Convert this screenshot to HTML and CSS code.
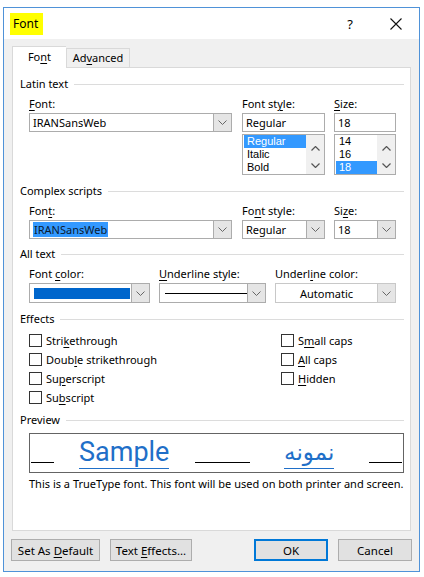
FILE: index.html
```html
<!DOCTYPE html>
<html>
<head>
<meta charset="utf-8">
<link rel="stylesheet" href="styles.css">
</head>
<body>
<div class="window">
  <div class="titlebar">
    <span class="title">Font</span>
    <span class="help">?</span>
    <svg class="close" width="12" height="12" viewBox="0 0 12 12"><path d="M0.5 0.5 L11.5 11.5 M11.5 0.5 L0.5 11.5" stroke="#111" stroke-width="1.1" fill="none"/></svg>
  </div>
  <div class="client">
    <div class="tabs">
      <div class="tab active">Fo<u>n</u>t</div>
      <div class="tab">Ad<u>v</u>anced</div>
    </div>
    <div class="panel">
      <div class="group"><span>Latin text</span><i></i></div>
      <div class="row labels">
        <label class="c1"><u>F</u>ont:</label>
        <label class="c2">Font st<u>y</u>le:</label>
        <label class="c3"><u>S</u>ize:</label>
      </div>
      <div class="row">
        <div class="combo c1"><span class="val">IRANSansWeb</span><span class="btn"><svg width="9" height="5" viewBox="0 0 9 5"><polyline points="0.5,0.5 4.5,4.5 8.5,0.5" fill="none" stroke="#666" stroke-width="1"/></svg></span></div>
        <div class="field c2">Regular</div>
        <div class="field c3">18</div>
      </div>
      <div class="row lists">
        <div class="c1"></div>
        <div class="list c2">
          <div class="items"><div class="sel">Regular</div><div>Italic</div><div>Bold</div></div>
          <div class="sb"><svg width="9" height="5" viewBox="0 0 9 5"><polyline points="0.5,4.5 4.5,0.5 8.5,4.5" fill="none" stroke="#555" stroke-width="1.2"/></svg><svg width="9" height="5" viewBox="0 0 9 5"><polyline points="0.5,0.5 4.5,4.5 8.5,0.5" fill="none" stroke="#555" stroke-width="1.2"/></svg></div>
        </div>
        <div class="list c3">
          <div class="items"><div>14</div><div>16</div><div class="sel">18</div></div>
          <div class="sb"><svg width="9" height="5" viewBox="0 0 9 5"><polyline points="0.5,4.5 4.5,0.5 8.5,4.5" fill="none" stroke="#555" stroke-width="1.2"/></svg><svg width="9" height="5" viewBox="0 0 9 5"><polyline points="0.5,0.5 4.5,4.5 8.5,0.5" fill="none" stroke="#555" stroke-width="1.2"/></svg></div>
        </div>
      </div>

      <div class="group g2"><span>Complex scripts</span><i></i></div>
      <div class="row labels">
        <label class="c1">Fon<u>t</u>:</label>
        <label class="c2">Fo<u>n</u>t style:</label>
        <label class="c3">Si<u>z</u>e:</label>
      </div>
      <div class="row">
        <div class="combo c1"><span class="val"><span class="hl">IRANSansWeb</span></span><span class="btn"><svg width="9" height="5" viewBox="0 0 9 5"><polyline points="0.5,0.5 4.5,4.5 8.5,0.5" fill="none" stroke="#666" stroke-width="1"/></svg></span></div>
        <div class="combo c2"><span class="val">Regular</span><span class="btn"><svg width="9" height="5" viewBox="0 0 9 5"><polyline points="0.5,0.5 4.5,4.5 8.5,0.5" fill="none" stroke="#666" stroke-width="1"/></svg></span></div>
        <div class="combo c3"><span class="val">18</span><span class="btn"><svg width="9" height="5" viewBox="0 0 9 5"><polyline points="0.5,0.5 4.5,4.5 8.5,0.5" fill="none" stroke="#666" stroke-width="1"/></svg></span></div>
      </div>

      <div class="group g3"><span>All text</span><i></i></div>
      <div class="row labels">
        <label class="d1">Font <u>c</u>olor:</label>
        <label class="d2"><u>U</u>nderline style:</label>
        <label class="d3">Underl<u>i</u>ne color:</label>
      </div>
      <div class="row">
        <div class="combo short d1"><span class="val"><span class="swatch"></span></span><span class="btn"><svg width="9" height="5" viewBox="0 0 9 5"><polyline points="0.5,0.5 4.5,4.5 8.5,0.5" fill="none" stroke="#666" stroke-width="1"/></svg></span></div>
        <div class="combo short d2"><span class="val"><span class="uline"></span></span><span class="btn"><svg width="9" height="5" viewBox="0 0 9 5"><polyline points="0.5,0.5 4.5,4.5 8.5,0.5" fill="none" stroke="#666" stroke-width="1"/></svg></span></div>
        <div class="combo short flat d3"><span class="val center">Automatic</span><span class="btn"><svg width="9" height="5" viewBox="0 0 9 5"><polyline points="0.5,0.5 4.5,4.5 8.5,0.5" fill="none" stroke="#666" stroke-width="1"/></svg></span></div>
      </div>

      <div class="group g4"><span>Effects</span><i></i></div>
      <div class="effects">
        <div class="col">
          <div class="chk"><b></b>Stri<u>k</u>ethrough</div>
          <div class="chk"><b></b>Doub<u>l</u>e strikethrough</div>
          <div class="chk"><b></b>Su<u>p</u>erscript</div>
          <div class="chk"><b></b>Su<u>b</u>script</div>
        </div>
        <div class="col right">
          <div class="chk"><b></b>S<u>m</u>all caps</div>
          <div class="chk"><b></b><u>A</u>ll caps</div>
          <div class="chk"><b></b><u>H</u>idden</div>
        </div>
      </div>

      <div class="group g5"><span>Preview</span><i></i></div>
      <div class="preview">
        <span class="ln l1"></span>
        <span class="sample">Sample</span>
        <span class="ln l2"></span>
        <span class="sample ar" lang="fa" dir="rtl">نمونه</span>
        <span class="ln l3"></span>
      </div>
      <div class="caption">This is a TrueType font. This font will be used on both printer and screen.</div>
    </div>
    <div class="buttons">
      <button class="b1">Set As <u>D</u>efault</button>
      <button class="b2">Text <u>E</u>ffects...</button>
      <span class="spacer"></span>
      <button class="b3 default">OK</button>
      <button class="b4">Cancel</button>
    </div>
  </div>
</div>
</body>
</html>
```
FILE: styles.css
```css
* { box-sizing: border-box; }
html, body { margin: 0; padding: 0; background: #fff; }
body {
  font-family: "Noto Sans", "Open Sans", sans-serif;
  font-size: 11px;
  color: #000;
  width: 424px;
  height: 577px;
  overflow: hidden;
}
u { text-decoration: underline; text-underline-offset: 2px; }
.window {
  margin: 7px 0 0 3px;
  width: 417px;
  height: 565px;
  border: 1px solid #4f92d8;
  display: flex;
  flex-direction: column;
}
.titlebar {
  height: 31px;
  background: #fff;
  display: flex;
  align-items: center;
  padding-left: 6px;
}
.title {
  background: #ffff00;
  width: 33px;
  height: 22px;
  line-height: 22px;
  padding-left: 3px;
  font-size: 12px;
}
.help {
  margin-left: auto;
  font-size: 13px;
  margin-right: 37px;
}
.close { margin-right: 17px; }
.client {
  flex: 1;
  background: #f0f0f0;
  padding: 7px 8px 0 8px;
  display: flex;
  flex-direction: column;
}
.tabs {
  display: flex;
  align-items: flex-end;
  height: 21px;
  position: relative;
  z-index: 1;
}
.tab {
  height: 19px;
  line-height: 18px;
  padding: 0 4px;
  border: 1px solid #d9d9d9;
  border-bottom: none;
  background: #f0f0f0;
  width: 64px;
  text-align: center;
}
.tab.active {
  height: 22px;
  margin-bottom: -1px;
  background: #fff;
  width: 54px;
  line-height: 20px;
  border-right: none;
}
.panel {
  height: 464px;
  background: #fff;
  border: 1px solid #d9d9d9;
  padding: 9px 6px 0 7px;
}
.group {
  display: flex;
  align-items: center;
  height: 14px;
  line-height: 14px;
}
.group i {
  flex: 1;
  border-top: 1px solid #dcdcdc;
  margin-left: 6px;
}
.g2 { margin-top: 9px; }
.g3 { margin-top: 8px; }
.g4 { margin-top: 9px; }
.g5 { margin-top: 6px; }
.row {
  display: flex;
  padding-left: 9px;
}
.labels { margin-top: 6px; height: 14px; line-height: 14px; }
.labels + .row { margin-top: 2px; }
.c1 { width: 203px; margin-right: 10px; }
.c2 { width: 83px; margin-right: 9px; }
.c3 { width: 62px; }
.d1 { width: 121px; margin-right: 9px; }
.d2 { width: 107px; margin-right: 9px; }
.d3 { width: 121px; }
.combo {
  display: flex;
  height: 19px;
  border: 1px solid #acacac;
  background: #fff;
}
.combo .val {
  flex: 1;
  padding-left: 3px;
  line-height: 17px;
  overflow: hidden;
  white-space: nowrap;
  display: flex;
  align-items: center;
}
.combo .val.center { justify-content: center; padding-left: 0; }
.combo .btn {
  width: 18px;
  background: #e5e5e5;
  border-left: 1px solid #acacac;
  display: flex;
  align-items: center;
  justify-content: center;
}
.combo.short { height: 20px; }
.flat { border-color: #c8c8c8; }
.flat .btn { border-left-color: #c8c8c8; }
.hl {
  background: #3399ff;
  color: #0a1a30;
  padding: 0 1px;
  line-height: 15px;
}
.swatch {
  display: block;
  width: 96px;
  height: 11px;
  background: #0066cc;
  margin-left: 1px;
}
.uline {
  display: block;
  width: 82px;
  border-top: 1px solid #000;
  margin-left: 2px;
}
.field {
  height: 19px;
  border: 1px solid #acacac;
  line-height: 17px;
  padding-left: 3px;
}
.lists { margin-top: 2px; }
.list {
  height: 41px;
  border: 1px solid #acacac;
  display: flex;
}
.items { flex: 1; padding: 0 0 0 1px; }
.items div {
  height: 13px;
  line-height: 13px;
  padding-left: 3px;
  font-family: "Liberation Sans", Arial, sans-serif;
  font-size: 11px;
}
.items .sel { background: #3399ff; color: #fff; }
.sb {
  width: 18px;
  background: #f0f0f0;
  display: flex;
  flex-direction: column;
  align-items: center;
  justify-content: space-between;
  padding: 11px 0 6px;
}
.effects {
  display: flex;
  padding-left: 9px;
  margin-top: 5px;
}
.col { width: 252px; }
.col.right { width: auto; }
.chk {
  height: 19px;
  display: flex;
  align-items: center;
}
.chk b {
  width: 13px;
  height: 13px;
  border: 1px solid #333;
  margin-right: 4px;
  background: #fff;
}
.preview {
  margin: 6px 0 0 9px;
  height: 40px;
  border: 1px solid #646464;
  display: flex;
  align-items: flex-end;
  padding: 0 1px 3px 1px;
}
.ln {
  border-top: 1px solid #000;
  height: 0;
  margin-bottom: 6px;
}
.l1 { width: 24px; }
.l2 { width: 57px; margin-left: 26px; }
.l3 { width: 34px; margin-left: 35px; }
.sample {
  font-family: Roboto, "Noto Sans", sans-serif;
  font-size: 27px;
  line-height: 31px;
  color: #1f6fc8;
  border-bottom: 1px solid #1f6fc8;
  margin-left: 25px;
  white-space: nowrap;
}
.sample.ar {
  font-family: "DejaVu Sans", sans-serif;
  font-size: 23px;
  margin-left: 34px;
}
.caption {
  margin: 4px 0 0 9px;
  height: 14px;
  line-height: 14px;
  white-space: nowrap;
}
.buttons {
  display: flex;
  margin-top: 8px;
}
button {
  font-family: inherit;
  font-size: 11.5px;
  color: #000;
  height: 22px;
  background: #e1e1e1;
  border: 1px solid #adadad;
  padding: 0;
  margin: 0;
}
.b1 { width: 89px; margin-left: -1px; }
.b2 { width: 82px; margin-left: 10px; }
.spacer { flex: 1; }
.b3 { width: 74px; }
.b4 { width: 74px; margin-left: 10px; margin-right: -1px; }
.default { border: 2px solid #0078d7; }
```
